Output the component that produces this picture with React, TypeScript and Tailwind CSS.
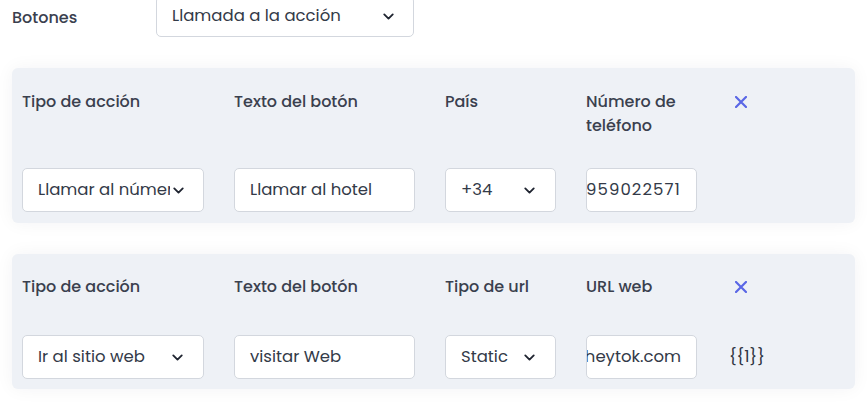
import React from 'react'

function Chevron({ className = '' }: { className?: string }) {
  return (
    <svg viewBox="0 0 24 24" className={`w-[17px] h-[17px] shrink-0 ${className}`} fill="none" stroke="#1f2430" strokeWidth={2.6} strokeLinecap="round" strokeLinejoin="round">
      <path d="M6 9l6 6 6-6" />
    </svg>
  )
}

function CloseIcon() {
  return (
    <svg viewBox="0 0 12 12" className="w-3 h-3" fill="none" stroke="#5a67e6" strokeWidth={2.2} strokeLinecap="square">
      <path d="M1 1l10 10M11 1L1 11" />
    </svg>
  )
}

function SelectBox({ value, width, chevronPad = 'pr-[17px]' }: { value: string; width: string; chevronPad?: string }) {
  return (
    <div className={`${width} h-11 bg-white border border-[#d3d7de] rounded-[5px] flex items-center pl-[15px] ${chevronPad}`}>
      <span className="flex-1 min-w-0 overflow-hidden whitespace-nowrap">{value}</span>
      <Chevron />
    </div>
  )
}

function TextBox({ value, width, end = false, spaced = false }: { value: string; width: string; end?: boolean; spaced?: boolean }) {
  if (end) {
    // input desplazado al final del texto
    return (
      <div
        dir="rtl"
        className={`${width} h-11 leading-[42px] bg-white border border-[#d3d7de] rounded-[5px] overflow-hidden whitespace-nowrap pr-[15px]`}
      >
        <span dir="ltr" className={spaced ? 'tracking-[1.1px]' : ''}>
          {value}
        </span>
      </div>
    )
  }
  return (
    <div className={`${width} h-11 bg-white border border-[#d3d7de] rounded-[5px] flex items-center overflow-hidden whitespace-nowrap pl-[15px]`}>
      <span className="shrink-0">{value}</span>
    </div>
  )
}

type Row = {
  labels: string[]
  fields: React.ReactNode[]
  extra?: React.ReactNode
  pt: string
  gap: string
  pb: string
}

function ButtonCard({ labels, fields, extra, pt, gap, pb }: Row) {
  return (
    <div className={`mx-3 bg-[#eef1f6] rounded-md shadow-[0_0_18px_rgba(30,40,60,0.05)] pl-[10px] ${pt} ${pb}`}>
      <div className={`grid grid-cols-[182px_181px_111px_111px_80px] gap-x-[30px] ${gap}`}>
        {labels.map((l) => (
          <div key={l} className="font-medium text-[16px] leading-6 text-[#3a404e] pr-2">
            {l}
          </div>
        ))}
        <div className="h-6 flex items-center pl-2">
          <CloseIcon />
        </div>
      </div>
      <div className="grid grid-cols-[182px_181px_111px_111px_80px] gap-x-[30px] text-[16.5px] text-[#333a48]">
        {fields}
        <div className="flex items-center pl-[2px]">{extra}</div>
      </div>
    </div>
  )
}

export default function App() {
  return (
    <div className="w-[867px] h-[420px] bg-white overflow-hidden font-['Poppins','Open_Sans',sans-serif] text-[#333a48]">
      {/* Selector de botones */}
      <div className="flex items-center -mt-[4px] pl-3">
        <span className="w-[144px] font-medium text-[16px] text-[#3a404e] pt-[2px]">Botones</span>
        <div className="w-[258px] h-[41px] border border-[#d3d7de] rounded-[5px] flex items-center pl-[15px] pr-[16px] text-[16.5px]">
          <span className="flex-1">Llamada a la acción</span>
          <Chevron />
        </div>
      </div>

      <div className="mt-[31px] flex flex-col gap-[31px]">
        <ButtonCard
          pt="pt-[22px]"
          gap="mb-[30px]"
          pb="pb-[11px]"
          labels={['Tipo de acción', 'Texto del botón', 'País', 'Número de teléfono']}
          fields={[
            <SelectBox key="a" value="Llamar al número" width="w-[182px]" chevronPad="pr-[16px]" />,
            <TextBox key="b" value="Llamar al hotel" width="w-[181px]" />,
            <SelectBox key="c" value="+34" width="w-[111px]" />,
            <TextBox key="d" value="+34959022571" width="w-[111px]" end spaced />,
          ]}
        />
        <ButtonCard
          pt="pt-[21px]"
          gap="mb-[36px]"
          pb="pb-[10px]"
          labels={['Tipo de acción', 'Texto del botón', 'Tipo de url', 'URL web']}
          fields={[
            <SelectBox key="a" value="Ir al sitio web" width="w-[182px]" />,
            <TextBox key="b" value="visitar Web" width="w-[181px]" />,
            <SelectBox key="c" value="Static" width="w-[111px]" />,
            <TextBox key="d" value="https://www.heytok.com" width="w-[111px]" end />,
          ]}
          extra={<span className="text-[16.5px] text-[#2f3542]">{'{{1}}'}</span>}
        />
      </div>
    </div>
  )
}
